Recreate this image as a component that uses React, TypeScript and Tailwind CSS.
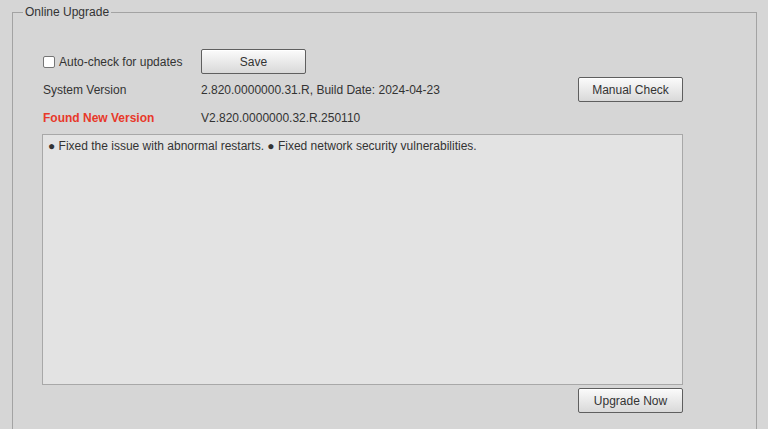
const btn =
  "h-[25px] w-[105px] rounded-[2px] border border-[#5f5f5f] bg-gradient-to-b from-[#fbfbfb] to-[#d9d9d9] text-[12px] text-[#333] shadow-[inset_0_1px_0_#fff]";

const App = () => {
  return (
    <div
      className="h-[429px] w-full overflow-hidden bg-[#d6d6d6] pt-[5px] text-[12px] text-[#333]"
      style={{ fontFamily: '"Liberation Sans", Arial, sans-serif' }}
    >
      <fieldset className="ml-[12px] mr-[11px] h-[440px] border border-[#a3a3a3] pl-[29px] pt-[30px]">
        <legend className="ml-[-19px] px-[2px] text-[12px] leading-[14px] text-[#333]">
          Online Upgrade
        </legend>

        <div className="flex w-[641px] flex-col">
          {/* Auto-check row */}
          <div className="flex h-[25px] items-center">
            <label className="flex w-[159px] items-center gap-[4px] pl-[1px]">
              <input
                type="checkbox"
                className="h-[12px] w-[12px] appearance-none rounded-[2px] border border-[#767676] bg-white"
              />
              <span>Auto-check for updates</span>
            </label>
            <button className={btn}>Save</button>
          </div>

          {/* System version */}
          <div className="mt-[3px] flex h-[25px] items-center">
            <span className="w-[159px] pl-[1px]">System Version</span>
            <span>2.820.0000000.31.R, Build Date: 2024-04-23</span>
            <button className={`${btn} ml-auto`}>Manual Check</button>
          </div>

          {/* New version */}
          <div className="mt-[3px] flex h-[25px] items-center">
            <span className="w-[159px] pl-[1px] font-bold text-[#e8392a]">Found New Version</span>
            <span>V2.820.0000000.32.R.250110</span>
          </div>

          <div className="mt-[4px] h-[251px] w-[641px] border border-[#a8a8a8] bg-[#e3e3e3] px-[5px] py-[4px] leading-[14px]">
            ● Fixed the issue with abnormal restarts. ● Fixed network security vulnerabilities.
          </div>

          <div className="mt-[3px] flex justify-end">
            <button className={btn}>Upgrade Now</button>
          </div>
        </div>
      </fieldset>
    </div>
  );
};

export default App;
